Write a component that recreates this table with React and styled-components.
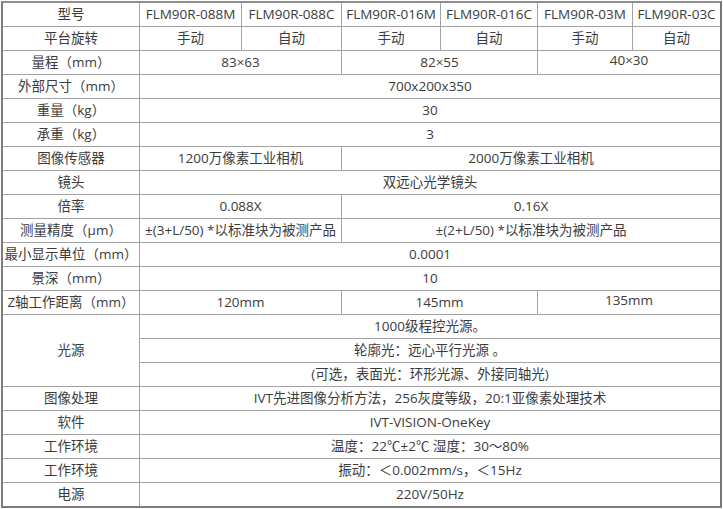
import React from 'react';
import styled, { createGlobalStyle } from 'styled-components';

const GlobalStyle = createGlobalStyle`
  body {
    margin: 0;
    background: #ffffff;
  }
`;

const Page = styled.div`
  padding: 1px 0 0 1px;
  width: 723px;
  box-sizing: border-box;
`;

const SpecGrid = styled.div`
  display: grid;
  width: 721px;
  box-sizing: border-box;
  grid-template-columns: 136px 101px 99px 98px 96px 94px 1fr;
  grid-auto-rows: 23px;
  gap: 1px;
  background: #a3a3a3;
  border-top: 2px solid #8e8e8e;
  border-left: 2px solid #7d7d7d;
  border-right: 2px solid #777777;
  border-bottom: 2px solid #7d7d7d;
  font-family: 'Open Sans', 'Noto Sans CJK SC', sans-serif;
  font-size: 13.5px;
  color: #3c3c3c;
`;

const Cell = styled.div`
  grid-column: span ${(p) => p.$span || 1};
  grid-row: span ${(p) => p.$rows || 1};
  background: #ffffff;
  display: flex;
  align-items: center;
  justify-content: center;
  white-space: nowrap;
  overflow: hidden;
  padding-bottom: ${(p) => (p.$raise ? '4px' : '0')};
  line-height: 1;
`;

const Label = styled(Cell)`
  letter-spacing: 0;
`;

const rows = [
  ['型号', ['FLM90R-088M', 1], ['FLM90R-088C', 1], ['FLM90R-016M', 1], ['FLM90R-016C', 1], ['FLM90R-03M', 1], ['FLM90R-03C', 1]],
  ['平台旋转', ['手动', 1], ['自动', 1], ['手动', 1], ['自动', 1], ['手动', 1], ['自动', 1]],
  ['量程（mm）', ['83×63', 2], ['82×55', 2], ['40×30', 2, true]],
  ['外部尺寸（mm）', ['700x200x350', 6]],
  ['重量（kg）', ['30', 6]],
  ['承重（kg）', ['3', 6]],
  ['图像传感器', ['1200万像素工业相机', 2], ['2000万像素工业相机', 4]],
  ['镜头', ['双远心光学镜头', 6]],
  ['倍率', ['0.088X', 2], ['0.16X', 4]],
  ['测量精度（μm）', ['±(3+L/50) *以标准块为被测产品', 2], ['±(2+L/50) *以标准块为被测产品', 4]],
  ['最小显示单位（mm）', ['0.0001', 6]],
  ['景深（mm）', ['10', 6]],
  ['Z轴工作距离（mm）', ['120mm', 2], ['145mm', 2], ['135mm', 2, true]],
];

const lightRows = ['1000级程控光源。', '轮廓光：远心平行光源 。', '(可选，表面光：环形光源、外接同轴光)'];

const tailRows = [
  ['图像处理', 'IVT先进图像分析方法，256灰度等级，20:1亚像素处理技术'],
  ['软件', 'IVT-VISION-OneKey'],
  ['工作环境', '温度：22℃±2℃ 湿度：30～80%'],
  ['工作环境', '振动：＜0.002mm/s，＜15Hz'],
  ['电源', '220V/50Hz'],
];

function App() {
  return (
    <Page>
      <GlobalStyle />
      <SpecGrid>
        {rows.map(([label, ...cells], i) => (
          <React.Fragment key={'r' + i}>
            <Label>{label}</Label>
            {cells.map(([text, span, raise], j) => (
              <Cell key={j} $span={span} $raise={raise}>
                {text}
              </Cell>
            ))}
          </React.Fragment>
        ))}

        <Label $rows={3}>光源</Label>
        {lightRows.map((text, i) => (
          <Cell key={'l' + i} $span={6}>
            {text}
          </Cell>
        ))}

        {tailRows.map(([label, text], i) => (
          <React.Fragment key={'t' + i}>
            <Label>{label}</Label>
            <Cell $span={6}>{text}</Cell>
          </React.Fragment>
        ))}
      </SpecGrid>
    </Page>
  );
}

export default App;
